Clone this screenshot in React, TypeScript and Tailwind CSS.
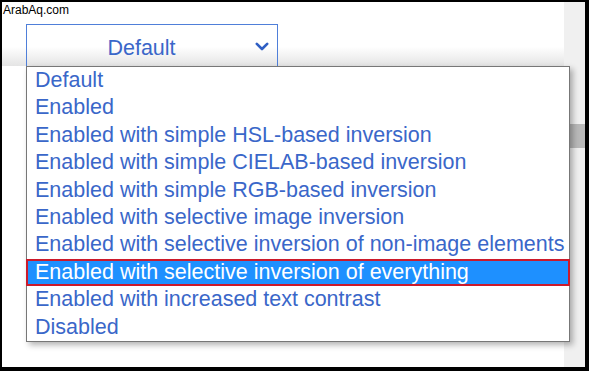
import { useState } from "react";

const options = [
  "Default",
  "Enabled",
  "Enabled with simple HSL-based inversion",
  "Enabled with simple CIELAB-based inversion",
  "Enabled with simple RGB-based inversion",
  "Enabled with selective image inversion",
  "Enabled with selective inversion of non-image elements",
  "Enabled with selective inversion of everything",
  "Enabled with increased text contrast",
  "Disabled",
];

export default function App() {
  const [active] = useState(7);

  return (
    <div className="w-[589px] h-[371px] bg-white border-black border-t-2 border-l-2 border-r-4 border-b-4 flex relative overflow-hidden font-['Liberation_Sans',Arial,sans-serif]">
      {/* page area with the select */}
      <div className="flex-1">
        <div className="h-[64px] overflow-hidden bg-gradient-to-b from-white from-70% to-[#e4e4e4]">
          <p className="text-[12px] leading-[14px] pl-[1px] pt-[1px] text-black">ArabAq.com</p>
          <button className="relative ml-[24px] mt-[7px] w-[252px] h-[46px] border border-[#4f7fd9] flex items-center justify-center pr-[21px] pt-[2px] text-[21.5px] text-[#3a67c9]">
            Default
            <svg
              viewBox="0 0 14 9"
              className="absolute right-[8px] top-[17px] w-[14px] h-[9px]"
              fill="none"
              stroke="#2f5fc4"
              strokeWidth="2.6"
              strokeLinecap="round"
              strokeLinejoin="round"
            >
              <path d="M1.8 1.8 L7 7 L12.2 1.8" />
            </svg>
          </button>
        </div>
      </div>

      {/* scrollbar */}
      <div className="w-[21px] bg-[#f0f0f0] flex flex-col">
        <div className="mt-[122px] h-[24px] bg-[#b9b9b9]" />
      </div>

      {/* open option list */}
      <ul className="absolute left-[24px] top-[64px] w-[544px] bg-white border border-[#777777] shadow-[3px_3px_6px_rgba(0,0,0,0.3)] text-[21.5px]">
        {options.map((o, i) =>
          i === active ? (
            <li
              key={o}
              className="-mx-px h-[27.4px] leading-[23.4px] pl-[7px] bg-[#1e90ff] border-2 border-[#cc1a2b] text-white whitespace-nowrap"
            >
              {o}
            </li>
          ) : (
            <li key={o} className="h-[27.4px] leading-[27.4px] pl-[8px] text-[#3a67c9] whitespace-nowrap">
              {o}
            </li>
          )
        )}
      </ul>
    </div>
  );
}
